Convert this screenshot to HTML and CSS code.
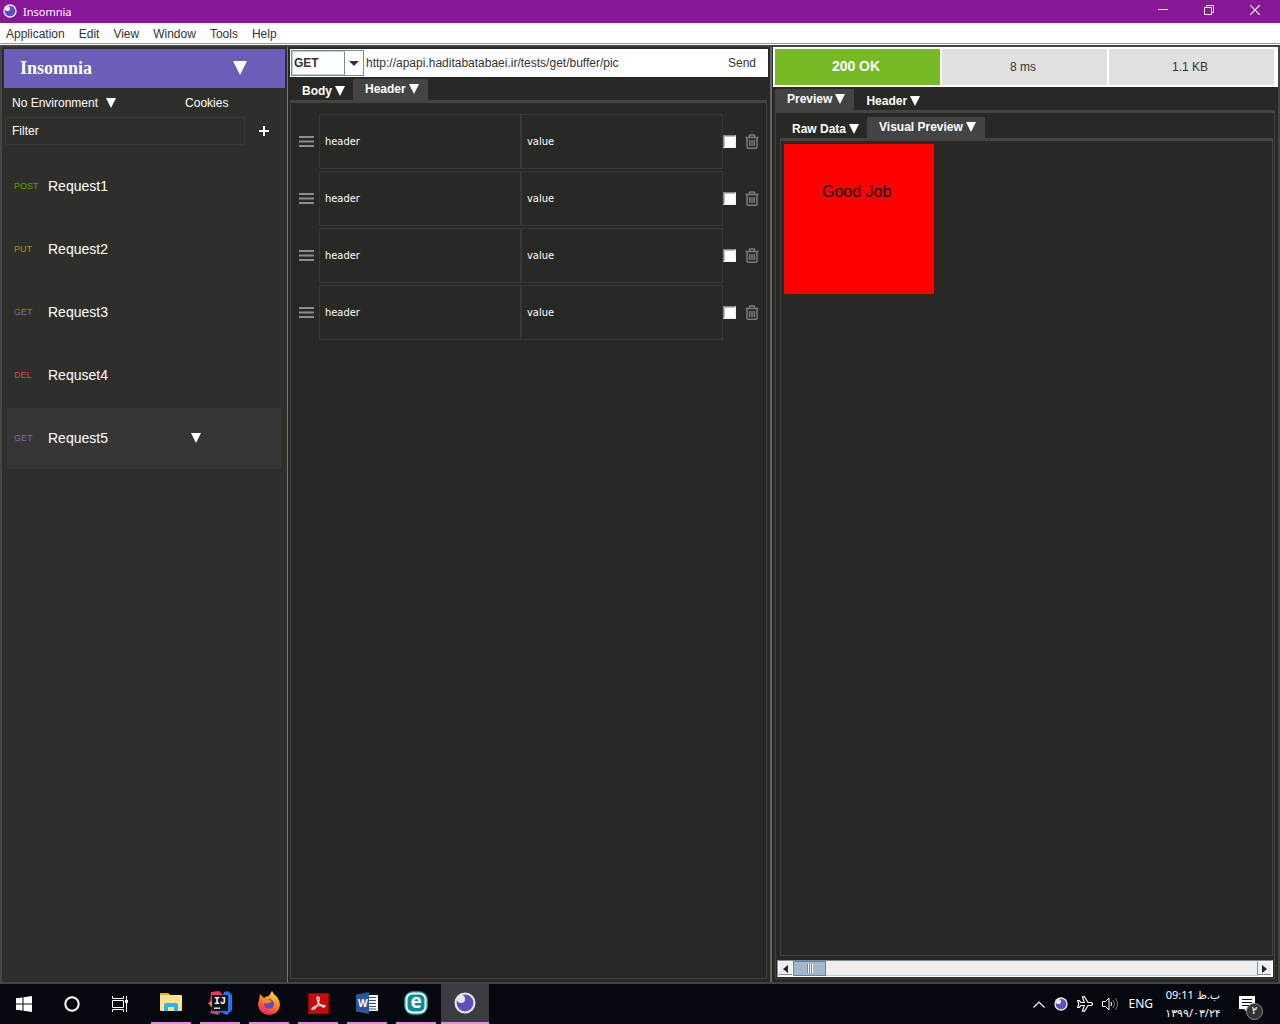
FILE: index.html
```html
<!DOCTYPE html>
<html lang="en">
<head>
<meta charset="utf-8">
<title>Insomnia</title>
<link rel="stylesheet" href="styles.css">
</head>
<body>
<svg class="defs" aria-hidden="true">
  <symbol id="logo" viewBox="0 0 22 22"><circle cx="11" cy="11" r="10.5" fill="#e8e8ec"/><circle cx="11" cy="11" r="8.4" fill="#5d4fbd"/><circle cx="7" cy="7" r="4" fill="#e8e8ec"/></symbol>
  <symbol id="down" viewBox="0 0 10 10" preserveAspectRatio="none"><path d="M0 0h10L5 10z" fill="currentColor"/></symbol>
  <symbol id="bars" viewBox="0 0 15 12"><path d="M0 1h15M0 5.500h15M0 10h15" stroke="#8e8e8b" stroke-width="2"/></symbol>
  <symbol id="trash" viewBox="0 0 14 15"><path d="M.5 3.500h13M4.500 3V1.500q0-.5.5-.5h4q.5 0 .5.500V3M2 3.500v9.500q0 1.300 1.300 1.300h7.400q1.300 0 1.300-1.300V3.500M4.700 6v6M7 6v6M9.300 6v6" fill="none" stroke="#7b7b78" stroke-width="1.500"/></symbol>
</svg>

<header class="titlebar">
  <svg class="titlebar-logo"><use href="#logo"/></svg>
  <h1 class="titlebar-name">Insomnia</h1>
  <button class="win-button" aria-label="Minimize"><svg viewBox="0 0 10 10"><path d="M0 4.500h10" stroke="#fff"/></svg></button>
  <button class="win-button" aria-label="Restore"><svg viewBox="0 0 10 10"><path d="M.5 2.500h7v7h-7zM2.500 2.500v-2h7v7h-2" fill="none" stroke="#fff"/></svg></button>
  <button class="win-button" aria-label="Close"><svg viewBox="0 0 10 10"><path d="M0 0l10 10M10 0L0 10" stroke="#fff" stroke-width="1.200"/></svg></button>
</header>

<nav class="menubar">
  <button>Application</button><button>Edit</button><button>View</button><button>Window</button><button>Tools</button><button>Help</button>
</nav>

<main class="workspace">
  <aside class="sidebar">
    <button class="brand"><span>Insomnia</span><svg class="brand-arrow"><use href="#down"/></svg></button>
    <div class="environment">
      <button class="environment-menu">No Environment <svg class="arrow"><use href="#down"/></svg></button>
      <button>Cookies</button>
    </div>
    <div class="filter">
      <input class="filter-input" type="text" value="Filter" aria-label="Filter">
      <button class="add" aria-label="Add request"><svg viewBox="0 0 10 10"><path d="M0 5h10M5 0v10" stroke="#fff" stroke-width="2"/></svg></button>
    </div>
    <ul class="requests">
      <li><button class="request"><span class="method post">POST</span><span class="request-name">Request1</span></button></li>
      <li><button class="request"><span class="method put">PUT</span><span class="request-name">Request2</span></button></li>
      <li><button class="request"><span class="method get">GET</span><span class="request-name">Request3</span></button></li>
      <li><button class="request"><span class="method del">DEL</span><span class="request-name">Requset4</span></button></li>
      <li><button class="request selected"><span class="method get">GET</span><span class="request-name">Request5</span><svg class="arrow"><use href="#down"/></svg></button></li>
    </ul>
  </aside>

  <section class="editor">
    <form class="url-bar">
      <div class="verb">
        <select aria-label="Method"><option>GET</option><option>POST</option><option>PUT</option><option>DELETE</option></select>
        <span class="verb-arrow"><svg viewBox="0 0 10 5"><path d="M0 0h10L5 5z" fill="#333"/></svg></span>
      </div>
      <input class="url" type="text" value="http://apapi.haditabatabaei.ir/tests/get/buffer/pic" aria-label="Address">
      <button class="send" type="button">Send</button>
    </form>
    <div class="tabs editor-tabs">
      <button class="tab">Body <svg class="arrow"><use href="#down"/></svg></button>
      <button class="tab active">Header <svg class="arrow"><use href="#down"/></svg></button>
    </div>
    <div class="pane header-pane">
      <div class="header-row"><svg class="bars"><use href="#bars"/></svg><input class="field" type="text" value="header" aria-label="Header 1"><input class="field" type="text" value="value" aria-label="Value 1"><input class="tick" type="checkbox" aria-label="Enable header 1"><button class="trash" aria-label="Delete header 1"><svg><use href="#trash"/></svg></button></div>
      <div class="header-row"><svg class="bars"><use href="#bars"/></svg><input class="field" type="text" value="header" aria-label="Header 2"><input class="field" type="text" value="value" aria-label="Value 2"><input class="tick" type="checkbox" aria-label="Enable header 2"><button class="trash" aria-label="Delete header 2"><svg><use href="#trash"/></svg></button></div>
      <div class="header-row"><svg class="bars"><use href="#bars"/></svg><input class="field" type="text" value="header" aria-label="Header 3"><input class="field" type="text" value="value" aria-label="Value 3"><input class="tick" type="checkbox" aria-label="Enable header 3"><button class="trash" aria-label="Delete header 3"><svg><use href="#trash"/></svg></button></div>
      <div class="header-row"><svg class="bars"><use href="#bars"/></svg><input class="field" type="text" value="header" aria-label="Header 4"><input class="field" type="text" value="value" aria-label="Value 4"><input class="tick" type="checkbox" aria-label="Enable header 4"><button class="trash" aria-label="Delete header 4"><svg><use href="#trash"/></svg></button></div>
    </div>
  </section>

  <section class="response">
    <div class="status"><strong class="status-ok">200 OK</strong><span>8 ms</span><span>1.1 KB</span></div>
    <div class="response-body">
      <div class="tabs">
        <button class="tab active">Preview <svg class="arrow"><use href="#down"/></svg></button>
        <button class="tab">Header <svg class="arrow"><use href="#down"/></svg></button>
      </div>
      <div class="pane preview-pane">
        <div class="tabs">
          <button class="tab">Raw Data <svg class="arrow"><use href="#down"/></svg></button>
          <button class="tab active">Visual Preview <svg class="arrow"><use href="#down"/></svg></button>
        </div>
        <div class="pane visual-pane"><div class="picture">Good Job</div></div>
        <div class="scrollbar">
          <button class="scroll-button" aria-label="Scroll left"><svg viewBox="0 0 5 8"><path d="M5 0v8L0 4z" fill="#222"/></svg></button>
          <div class="track"><div class="thumb"></div></div>
          <button class="scroll-button" aria-label="Scroll right"><svg viewBox="0 0 5 8"><path d="M0 0v8l5-4z" fill="#222"/></svg></button>
        </div>
      </div>
    </div>
  </section>
</main>

<footer class="taskbar">
  <button class="launch" aria-label="Start"><svg width="16" height="16" viewBox="0 0 16 16"><path d="M0 2.300L6.500 1.400V7.500H0zM7.500 1.200L16 0v7.500H7.500zM0 8.500h6.500v6.100L0 13.700zM7.500 8.500H16V16l-8.500-1.200z" fill="#fff"/></svg></button>
  <button class="launch" aria-label="Search"><svg width="16" height="16" viewBox="0 0 16 16"><circle cx="8" cy="8" r="6.700" fill="none" stroke="#fff" stroke-width="2"/></svg></button>
  <button class="launch" aria-label="Task view"><svg width="17" height="16" viewBox="0 0 17 16"><path d="M.5 0v2.500h11V0M.5 16v-2.500h11V16M.5 4.500h11v7H.5zM14.500 0v16" fill="none" stroke="#fff"/><path d="M13 4h3v3h-3z" fill="#fff"/></svg></button>
  <button class="launch open" aria-label="File Explorer"><svg width="22" height="20" viewBox="0 0 22 20"><path d="M0 1q0-1 1-1h7l2 2h11q1 0 1 1v14q0 1-1 1H1q-1 0-1-1z" fill="#ffe38f"/><path d="M0 1q0-1 1-1h7l2 2H0z" fill="#eeb300"/><path d="M4 18v-6q0-2 2-2h10q2 0 2 2v6h-4v-4H8v4z" fill="#32b1e8"/></svg></button>
  <button class="launch open" aria-label="IntelliJ IDEA"><svg class="app-letters" width="24" height="24" viewBox="0 0 24 24"><path d="M3 1l8-1 5 5v8L2 14z" fill="#f7315f"/><path d="M0 12l5-3v9z" fill="#f57c1f"/><path d="M2 22l3-7 9 4-4 5z" fill="#b0507f"/><path d="M16 1l4-1 4 4v15l-5 5-9-4z" fill="#1f76ef"/><path d="M4 4h16v16H4z" fill="#101014"/><text x="6" y="13" font-size="10" fill="#fff" class="mono-letter">IJ</text><path d="M6 16.500h6v1.300H6z" fill="#fff"/></svg></button>
  <button class="launch open" aria-label="Firefox"><svg width="24" height="24" viewBox="0 0 24 24"><defs><linearGradient id="fire" x1=".8" y1="0" x2=".3" y2="1"><stop offset="0" stop-color="#fff044"/><stop offset=".45" stop-color="#ff8b18"/><stop offset="1" stop-color="#f51c64"/></linearGradient></defs><path d="M2 9l1-6 4 4q2-2 5-2l3-5q1 3 5 6 3 4 3 8-1 9-11 10Q2 23 1 14q0-3 1-5z" fill="url(#fire)"/><circle cx="12" cy="13" r="5" fill="#6548c7"/><path d="M4 8q5-1 9 1l2 2-4 1q-1 1-3 0-3-1-4-4z" fill="#ff8a18"/></svg></button>
  <button class="launch open" aria-label="Acrobat Reader"><svg width="21" height="21" viewBox="0 0 21 21"><path d="M0 0h21v21H0z" fill="#c80c0a"/><path d="M.5.5h20v20H.5z" fill="none" stroke="#8b0808"/><path d="M10 4q2 0 1 4-2 6-5 8-2 1-2-.5 1-2 8-3 5-.5 5 .8-1 2-4-1-4-3-4-8 0-.3 1-.3z" fill="none" stroke="#fff" stroke-width="1.200"/></svg></button>
  <button class="launch open" aria-label="Word"><svg class="app-letters" width="22" height="22" viewBox="0 0 22 22"><path d="M11 3h11v16H11z" fill="#fff"/><path d="M13 5.500h7M13 8.500h7M13 11.500h7M13 14.500h7M13 17h7" stroke="#2b579a"/><path d="M0 2.500L13 0v22L0 19.500z" fill="#2b579a"/><text x="2" y="15" font-size="10" fill="#fff">W</text></svg></button>
  <button class="launch open" aria-label="ESET"><svg class="app-letters" width="24" height="24" viewBox="0 0 24 24"><rect width="24" height="24" rx="9" fill="#0a8d92"/><rect x="1.500" y="1.500" width="21" height="21" rx="7" fill="#fff"/><rect x="3.500" y="3.500" width="17" height="17" rx="5" fill="#0a8d92"/><text x="12" y="17" font-size="19" fill="#fff" text-anchor="middle">e</text></svg></button>
  <button class="launch open current" aria-label="Insomnia"><svg width="22" height="22"><use href="#logo"/></svg></button>
  <div class="tray">
    <svg width="12" height="7" viewBox="0 0 12 7"><path d="M.5 6.500L6 1l5.500 5.500" fill="none" stroke="#fff" stroke-width="1.200"/></svg>
    <svg width="14" height="14"><use href="#logo"/></svg>
    <svg width="16" height="16" viewBox="0 0 16 16"><path d="M.6 4.500h1.600L4 6.500h3.200L5.500.8h2L11 6.500h2.500q2 0 2 1.500t-2 1.500H11l-3.500 5.700h-2L7.200 9.500H4l-1.800 2H.6L1.800 8z" fill="none" stroke="#fff" stroke-width="1.200"/></svg>
    <svg width="17" height="14" viewBox="0 0 17 14"><path d="M.5 4.500h3L7 1v12L3.500 9.500h-3z" fill="none" stroke="#fff"/><path d="M9 5q1.500 2 0 4" fill="none" stroke="#fff"/><path d="M11 3q3 4 0 8M13.500 1q4 6 0 12" fill="none" stroke="#777"/></svg>
    <span class="language">ENG</span>
    <time class="clock" dir="rtl"><span>ب.ظ 09:11</span><span>۱۳۹۹/۰۳/۲۴</span></time>
    <div class="notices"><svg width="16" height="16" viewBox="0 0 16 16"><path d="M0 0h16v13H8v3l-3-3H0z" fill="#fff"/><path d="M3 3.500h10M3 6.500h10M3 9.500h7" stroke="#111"/></svg><span class="notice-count">۲</span></div>
  </div>
</footer>
</body>
</html>
```
FILE: styles.css
```css
* { box-sizing: border-box; }

body {
  margin: 0;
  min-height: 100vh;
  display: flex;
  flex-direction: column;
  background: #282925;
  color: #fff;
  font: 12px/16px "Liberation Sans", Arial, sans-serif;
}

button, input, select {
  margin: 0;
  padding: 0;
  border: 0;
  border-radius: 0;
  background: none;
  color: inherit;
  font: inherit;
}

svg { display: block; flex: none; }
.defs { position: absolute; width: 0; height: 0; }
.arrow { width: 10px; height: 10px; }

/* Window frame */
.titlebar {
  display: flex;
  align-items: flex-start;
  height: 23px;
  padding: 0 2px 0 3px;
  background: #881798;
}
.titlebar-logo { width: 14px; height: 14px; margin-top: 4px; }
.titlebar-name {
  flex: 1;
  margin: 0 0 0 6px;
  font: 11px/24px "Noto Sans", sans-serif;
}
.win-button {
  display: grid;
  place-items: center;
  width: 46px;
  height: 20px;
}
.win-button svg { width: 10px; height: 10px; }

.menubar {
  display: flex;
  gap: 14px;
  height: 22px;
  padding-left: 6px;
  border-bottom: 1px solid #fff;
  box-shadow: inset 0 -1px #999;
  background: #fff;
  color: #333;
}

.workspace {
  flex: 1;
  display: grid;
  grid-template-columns: minmax(0, 285fr) minmax(0, 483fr) minmax(0, 508fr);
  border: 2px solid #444;
}

/* Sidebar */
.sidebar { padding: 2px; background: #2e2f2b; }
.brand {
  display: flex;
  align-items: center;
  justify-content: space-between;
  width: 100%;
  height: 39px;
  padding: 0 38px 2px 16px;
  background: #695eb8;
  font: bold 18px/22px "Liberation Serif", serif;
}
.brand-arrow { width: 14px; height: 14px; }
.environment {
  display: flex;
  gap: 69px;
  height: 29px;
  padding-left: 8px;
}
.environment-menu { display: flex; align-items: center; gap: 8px; }
.filter { display: flex; align-items: center; padding: 0 2px 0 1px; }
.filter-input {
  flex: 1;
  min-width: 0;
  height: 28px;
  padding: 0 6px;
  border: 1px solid #373737;
}
.add { display: grid; place-items: center; width: 38px; height: 28px; }
.add svg { width: 10px; height: 10px; }
.requests {
  display: grid;
  gap: 2px;
  margin: 11px 3px 0;
  padding: 0;
  list-style: none;
}
.request {
  display: flex;
  align-items: center;
  width: 100%;
  height: 61px;
  padding: 0 7px 2px;
}
.request.selected { background: #363636; }
.method { width: 34px; font-size: 9px; text-align: left; }
.request-name { width: 143px; font-size: 14px; text-align: left; }
.post { color: #59a210; }
.put { color: #d07f1e; }
.get { color: #7d69cb; }
.del { color: #d14a4a; }

/* Request editor */
.editor {
  display: flex;
  flex-direction: column;
  padding: 2px;
  border-left: 1px solid #777;
}
.url-bar {
  display: flex;
  align-items: center;
  height: 28px;
  padding: 0 12px 0 1px;
  background: #fff;
  color: #333;
}
.verb {
  display: flex;
  width: 73px;
  height: 26px;
  border: 1px solid #7a8a99;
}
.verb select {
  flex: 1;
  appearance: none;
  padding-left: 1px;
  border: 1px solid #b8cfe5;
  border-right-color: #7a8a99;
  font-weight: bold;
}
.verb-arrow { display: grid; place-items: center; width: 18px; }
.verb-arrow svg { width: 10px; height: 5px; }
.url { flex: 1; min-width: 0; padding-left: 2px; }

.tabs { display: flex; height: 21px; }
.editor-tabs { margin-top: 2px; }
.tab {
  display: flex;
  align-items: center;
  gap: 3px;
  padding: 2px 8px 0 12px;
  font-weight: bold;
}
.tab.active { padding: 0 9px 2px 12px; background: #444; }
.pane {
  flex: 1;
  border: 1px solid #444;
  border-top-width: 3px;
}
.header-pane {
  display: grid;
  align-content: start;
  gap: 2px;
  margin: 0 1px 1px 0;
  padding: 11px 7px 11px 8px;
}
.header-row { display: flex; align-items: center; }
.bars { width: 15px; height: 12px; margin-right: 5px; }
.field {
  flex: 1;
  min-width: 0;
  height: 55px;
  padding: 0 0 0 5px;
  border: 1px solid #373737;
  font: 11px/16px "DejaVu Sans Condensed", "DejaVu Sans", sans-serif;
}
.tick {
  appearance: none;
  width: 13px;
  height: 13px;
  border: 1px solid;
  border-color: #888 #eee #eee #888;
  box-shadow: inset 1px 1px #bbb;
  background: #fff;
}
.trash { margin-left: 9px; }
.trash svg { width: 14px; height: 15px; }

/* Response */
.response {
  display: flex;
  flex-direction: column;
  padding-left: 1px;
  border-left: 2px solid #666;
}
.status {
  display: grid;
  grid-template-columns: repeat(3, 1fr);
  gap: 2px;
  height: 40px;
  padding: 2px 4px 2px 2px;
  background: #fff;
  color: #333;
}
.status > * { padding-right: 3px; background: #e0e0e0; line-height: 36px; text-align: center; }
.status .status-ok { background: #75ba24; color: #fff; font-size: 14px; line-height: 34px; }
.response-body {
  flex: 1;
  display: flex;
  flex-direction: column;
  padding: 2px 3px 3px 2px;
}
.preview-pane {
  display: flex;
  flex-direction: column;
  padding: 4px 1px 1px;
}
.preview-pane .tabs { margin-left: 3px; }
.visual-pane { margin-left: 3px; padding: 3px; }
.picture {
  width: 150px;
  height: 150px;
  padding-left: 38px;
  background: #f00;
  color: #000;
  font-size: 16px;
  line-height: 96px;
}
.scrollbar {
  display: flex;
  height: 17px;
  margin-top: 4px;
  border: 1px solid #7a8a99;
  border-right-color: #fff;
  border-bottom-color: #fff;
  background: #eee;
}
.scroll-button {
  display: grid;
  place-items: center;
  width: 15px;
  border: 1px solid #fff;
  box-shadow: inset 0 -1px #7a8a99;
}
.scroll-button:last-child { border-left-color: #7a8a99; }
.scroll-button svg { width: 5px; height: 8px; }
.track { flex: 1; border-bottom: 1px solid #b8cfe5; }
.thumb {
  display: grid;
  place-items: center;
  width: 33px;
  height: 15px;
  border: 1px solid #6382bf;
  background: #a3b8cc;
}
.thumb::after {
  content: "";
  width: 6px;
  height: 9px;
  background: repeating-linear-gradient(90deg, #6382bf 0 1px, #fff 1px 2px);
}

/* Taskbar */
.taskbar {
  display: flex;
  align-items: center;
  height: 40px;
  background: #05080e;
}
.launch {
  display: grid;
  place-items: center;
  width: 48px;
  height: 40px;
}
.launch.open {
  width: 40px;
  margin-left: 9px;
  border-bottom: 2px solid #ee82ee;
}
.launch:nth-child(4) { margin-left: 7px; }
.launch.current { width: 48px; margin-left: 5px; background: #393c40; }
.app-letters { overflow: visible; font-family: "Open Sans", sans-serif; font-weight: bold; }
.mono-letter { font-family: "Liberation Mono", monospace; }
.tray {
  display: flex;
  align-items: center;
  gap: 9px;
  margin-left: auto;
  padding-right: 17px;
}
.language { font: 12px/16px "Noto Sans", sans-serif; }
.clock {
  display: grid;
  width: 62px;
  font: 11px/18px "Noto Sans", "DejaVu Sans", sans-serif;
  text-align: center;
}
.notices { display: flex; width: 24px; margin-left: 6px; position: relative; }
.notice-count {
  position: absolute;
  left: 7px;
  top: 7px;
  width: 17px;
  height: 17px;
  border: 1px solid #888;
  border-radius: 50%;
  background: #333;
  font: 11px/14px "DejaVu Sans", sans-serif;
  text-align: center;
}
```
